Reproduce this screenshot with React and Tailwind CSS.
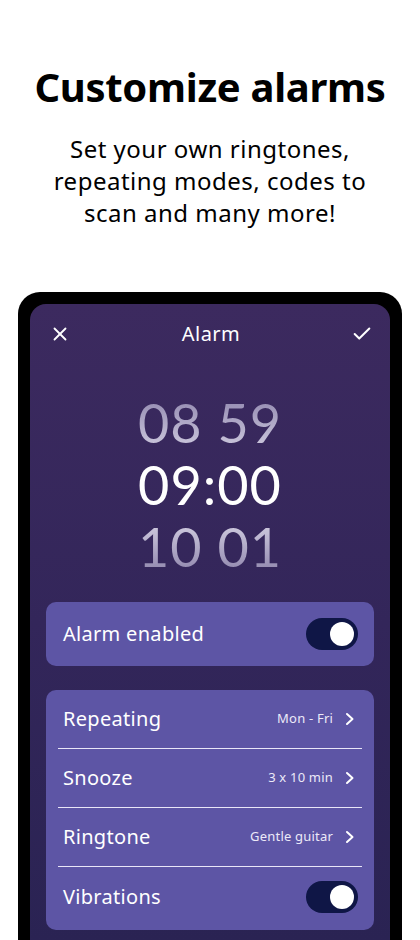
import React from 'react';
import { X, Check } from 'lucide-react';

const Chevron = () => (
  <svg width="10" height="14" viewBox="0 0 10 14" fill="none" className="text-white">
    <path d="M2 2 L7.5 7 L2 12" stroke="currentColor" strokeWidth="2" strokeLinecap="round" strokeLinejoin="round" />
  </svg>
);

const Toggle = () => (
  <div className="w-[52px] h-8 rounded-full bg-[#0f1646] flex items-center justify-end pr-1">
    <div className="w-6 h-6 rounded-full bg-white" />
  </div>
);

const LinkRow = ({ label, value }) => (
  <div className="h-[59px] flex items-center pl-[5px] pr-[7px] border-b border-[#e9e6f7]">
    <span className="text-[20px] tracking-[0.3px] text-white flex-1">{label}</span>
    <span className="text-[13px] tracking-[0.2px] text-[#ece9f8] mr-[12px]">{value}</span>
    <Chevron />
  </div>
);

const App = () => {
  return (
    <div className="w-[420px] h-[940px] bg-white overflow-hidden flex flex-col items-center font-['Noto_Sans',sans-serif]">
      {/* Intro */}
      <h1 className="mt-[63px] text-[40px] leading-[48px] font-bold tracking-[-0.3px] text-black">Customize alarms</h1>
      <p className="mt-[22px] text-[24px] leading-[32px] tracking-[0.5px] text-black text-center w-[340px]">
        Set your own ringtones, repeating modes, codes to scan and many more!
      </p>

      {/* Phone */}
      <div className="mt-[63px] w-[384px] flex-1 bg-black rounded-t-[22px] pt-3 px-3">
        <div className="h-full rounded-t-[16px] bg-gradient-to-b from-[#3c2a5f] via-[#33265a] to-[#2a2353] px-4">
          <div className="h-[60px] flex items-center justify-between pl-[3px] pr-[1px]">
            <X size={22} strokeWidth={2} className="text-white" />
            <span className="text-[20px] tracking-[0.5px] text-white">Alarm</span>
            <Check size={22} strokeWidth={2.2} className="text-white" />
          </div>

          {/* Time picker */}
          <div className="mt-[28px] flex flex-col items-center font-['Lato',sans-serif] text-[54px] leading-[62px] tracking-[1px]">
            <span className="bg-gradient-to-b from-[#8e84ac] to-[#d3cfe2] bg-clip-text text-transparent">08 59</span>
            <span className="text-white">09:00</span>
            <span className="bg-gradient-to-b from-[#dad6e7] to-[#8a80a8] bg-clip-text text-transparent">10 01</span>
          </div>

          {/* Enabled */}
          <div className="mt-6 h-16 rounded-[10px] bg-[#5d55a5] flex items-center justify-between pl-[17px] pr-4">
            <span className="text-[20px] tracking-[0.3px] text-white">Alarm enabled</span>
            <Toggle />
          </div>

          {/* Settings */}
          <div className="mt-6 rounded-[10px] bg-[#5d55a5] px-3 pb-1">
            <LinkRow label="Repeating" value="Mon - Fri" />
            <LinkRow label="Snooze" value="3 x 10 min" />
            <LinkRow label="Ringtone" value="Gentle guitar" />
            <div className="h-[59px] flex items-center justify-between pl-[5px] pr-1">
              <span className="text-[20px] tracking-[0.3px] text-white">Vibrations</span>
              <Toggle />
            </div>
          </div>
        </div>
      </div>
    </div>
  );
};

export default App;
